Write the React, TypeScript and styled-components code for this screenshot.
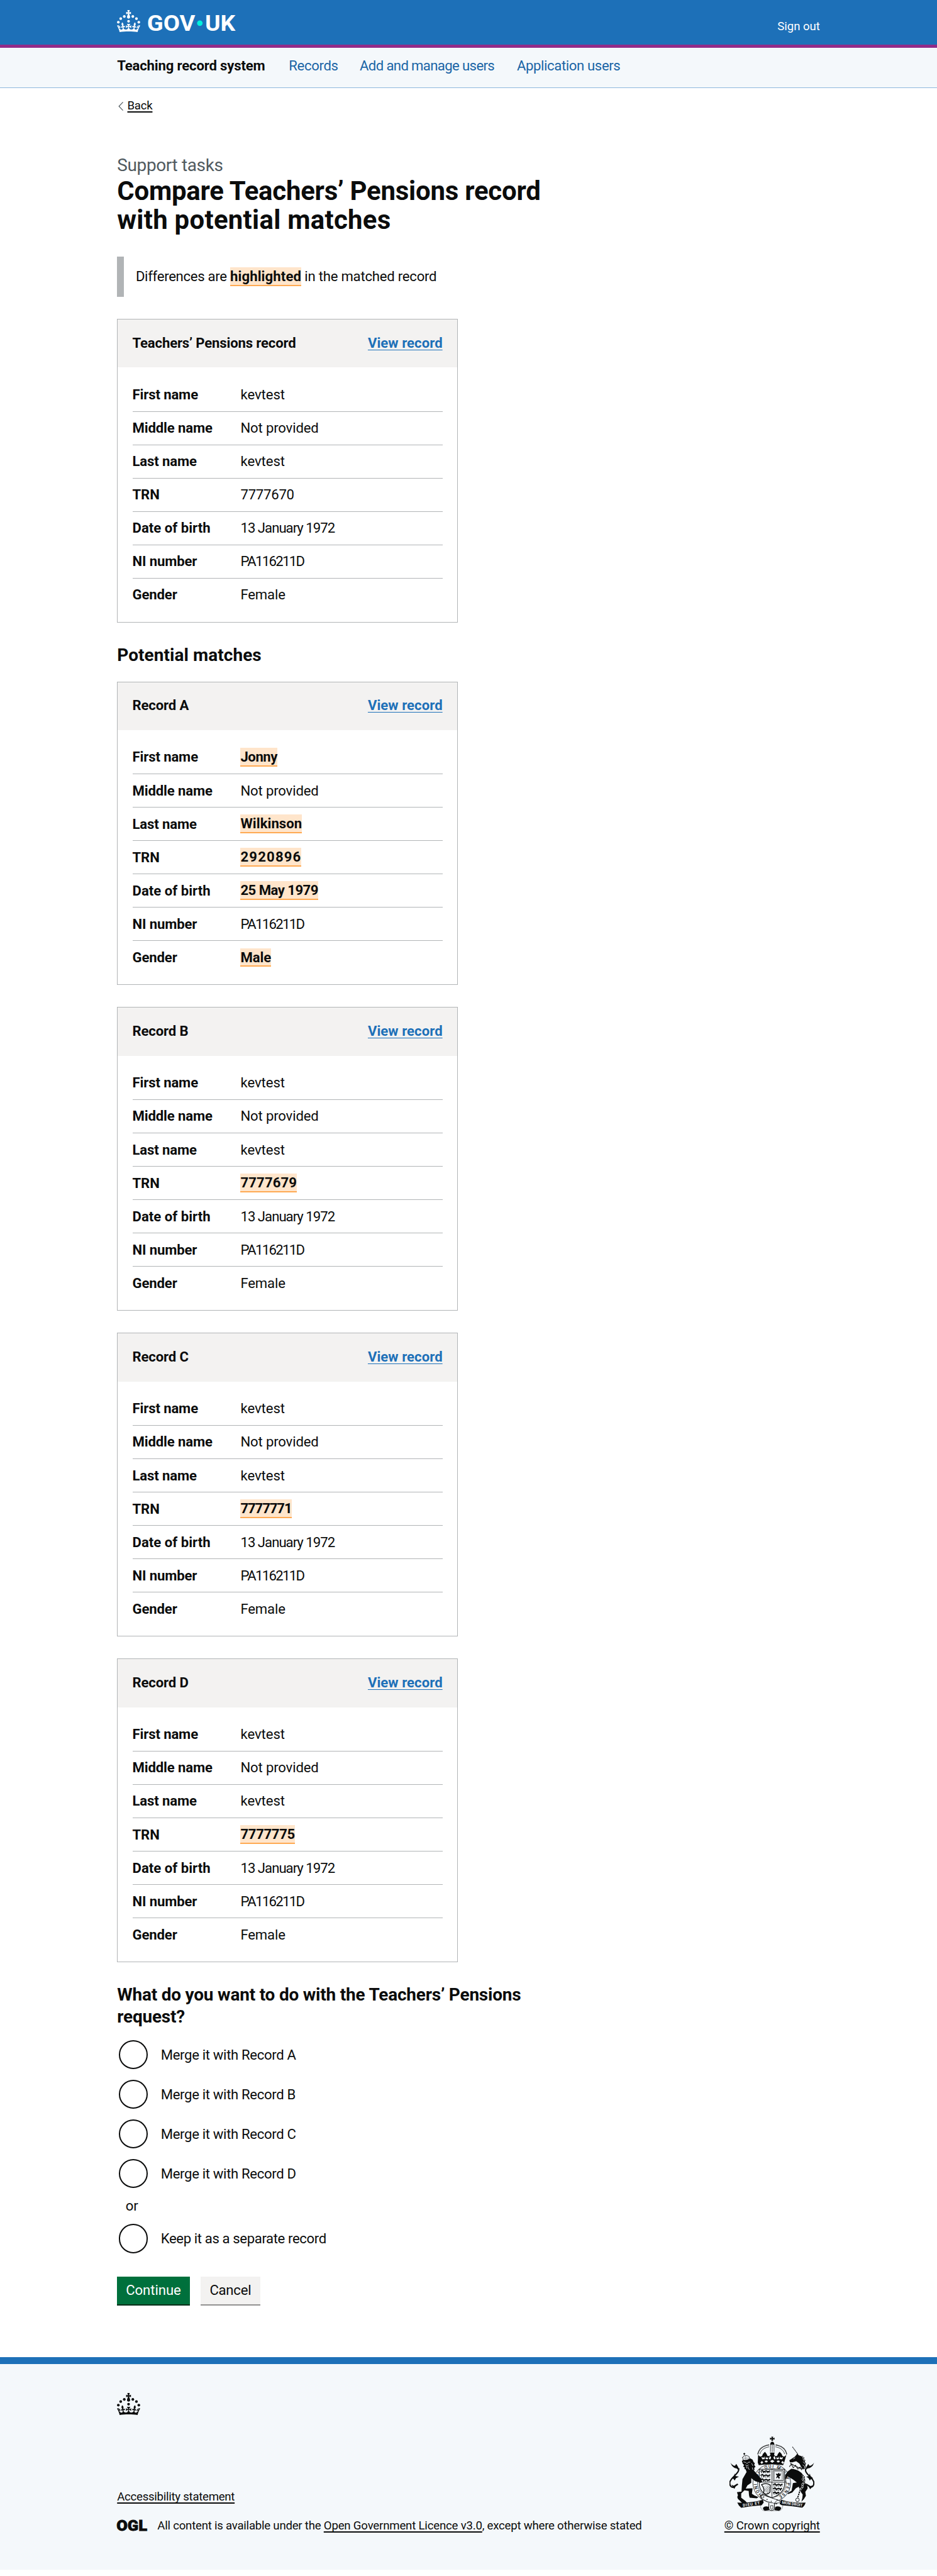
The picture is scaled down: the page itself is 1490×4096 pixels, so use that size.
import React from "react";
import styled, { createGlobalStyle } from "styled-components";

const GlobalStyle = createGlobalStyle`
  html {
    font-size: 11.640625px;
    background: #fff;
  }
  body {
    margin: 0;
    font-family: Roboto, "Liberation Sans", sans-serif;
    color: #0b0c0c;
    font-size: 1.9rem;
    line-height: 2.5rem;
  }
  *, *::before, *::after {
    box-sizing: border-box;
  }
`;

const Container = styled.div`
  width: 96rem;
  margin: 0 auto;
`;

/* spacing between letters, in em */
const Txt = styled.span<{ $track?: number }>`
  letter-spacing: ${({ $track = -0.013 }) => $track}em;
  white-space: nowrap;
`;

const Header = styled.header`
  background: #1d70b8;
  border-bottom: 0.4667rem solid #912b88;
`;

const HeaderInner = styled(Container)`
  height: 6.0667rem;
  display: flex;
  justify-content: space-between;
`;

const Logo = styled.svg`
  margin-top: 1.3333rem;
  width: 16.2rem;
  height: 3rem;
  fill: #fff;
  overflow: visible;
`;

const SignOut = styled.a`
  margin-top: 2.7rem;
  font-size: 1.6rem;
  line-height: 2rem;
  color: #fff;
  text-decoration: none;
`;

const ServiceNav = styled.nav`
  background: #f4f8fb;
  border-bottom: 1px solid #8eb8dc;
`;

const NavInner = styled(Container)`
  height: 5.4667rem;
  padding-top: 1.2333rem;
  display: flex;
`;

const ServiceName = styled.strong`
  font-weight: 700;
  width: 23.45rem;
`;

const NavLink = styled.a<{ $width: number }>`
  color: #1a65a6;
  text-decoration: none;
  width: ${({ $width }) => $width}rem;
`;

const BackLink = styled.a`
  display: flex;
  align-items: center;
  margin-top: 1.45rem;
  font-size: 1.6rem;
  line-height: 2rem;
  color: #0b0c0c;
`;

const BackArrow = styled.svg`
  width: 0.7rem;
  height: 1.2rem;
  margin: 0 0.57rem 0 0.13rem;
  fill: none;
  stroke: #505a5f;
  stroke-width: 1;
`;

const Underlined = styled.span<{ $track?: number }>`
  letter-spacing: ${({ $track = -0.013 }) => $track}em;
  text-decoration: underline;
  text-decoration-thickness: 2px;
  text-decoration-skip-ink: none;
  text-underline-offset: 3px;
  white-space: nowrap;
`;

const Caption = styled.span`
  display: block;
  margin-top: 5.6rem;
  font-size: 2.4rem;
  line-height: 3rem;
  color: #505a5f;
`;

const Title = styled.h1`
  margin: 0;
  font-size: 3.6rem;
  line-height: 4rem;
  font-weight: 700;
  letter-spacing: -0.005em;
`;

const InsetText = styled.div`
  margin-top: 2.97rem;
  padding: 1.4333rem 1.6rem;
  border-left: 1rem solid #b1b4b6;
  height: 5.4467rem;
  display: flex;
`;

const Mark = styled.mark<{ $track?: number }>`
  padding: 0.1rem 0 0.07rem;
  border-bottom: 2px solid #ffaa53;
  background: #ffe5cb;
  color: #0b0c0c;
  font-weight: 700;
  letter-spacing: ${({ $track = -0.005 }) => $track}em;
  white-space: nowrap;
`;

const SectionTitle = styled.h2`
  margin: 3.07rem 0 0;
  font-size: 2.4rem;
  line-height: 3rem;
  font-weight: 700;
  letter-spacing: 0.003em;
`;

const Card = styled.section<{ $gap?: number }>`
  width: 46.5333rem;
  height: 41.4667rem;
  margin-top: ${({ $gap = 3.0333 }) => $gap}rem;
  border: 1px solid #b1b4b6;
`;

const CardHeader = styled.div`
  height: 6.55rem;
  padding: 1.95rem 2rem 0;
  background: #f3f2f1;
  display: flex;
  justify-content: space-between;
  font-weight: 700;
`;

const ViewLink = styled.a`
  color: #1d70b8;
  text-decoration: underline;
  text-decoration-thickness: 1px;
  text-underline-offset: 3px;
  letter-spacing: 0.0023em;
`;

const List = styled.dl`
  margin: 0;
  padding: 1.5rem 2rem 0;
`;

const Row = styled.div`
  display: flex;
  height: 4.556rem;
  padding-top: 0.97rem;
  border-bottom: 1px solid #b1b4b6;
  &:last-child {
    border-bottom: 0;
  }
`;

const Key = styled.dt`
  width: 14.77rem;
  font-weight: 700;
`;

const Value = styled.dd`
  margin: 0;
`;

const Legend = styled.h2`
  margin: 3.03rem 0 1.6rem;
  font-size: 2.4rem;
  line-height: 3rem;
  font-weight: 700;
  letter-spacing: -0.0065em;
`;

const Radio = styled.label`
  display: flex;
  align-items: center;
  height: 4rem;
  margin: 0 0 1.413rem 0.2rem;
`;

const Circle = styled.span`
  width: 4rem;
  height: 4rem;
  margin-right: 1.77rem;
  border: 2px solid #0b0c0c;
  border-radius: 50%;
  background: #fff;
`;

const Divider = styled.div`
  margin: -0.25rem 0 1.2rem 1.15rem;
`;

const ButtonGroup = styled.div`
  display: flex;
  gap: 1.5rem;
  margin-top: 3.2rem;
`;

const Button = styled.button<{ $secondary?: boolean }>`
  width: ${({ $secondary }) => ($secondary ? "8.11rem" : "9.92rem")};
  height: 3.8rem;
  padding: 0;
  border: 0;
  border-radius: 0;
  font: inherit;
  text-align: center;
  background: ${({ $secondary }) => ($secondary ? "#f3f2f1" : "#00703c")};
  color: ${({ $secondary }) => ($secondary ? "#0b0c0c" : "#fff")};
  box-shadow: 0 2px 0 ${({ $secondary }) => ($secondary ? "#929191" : "#002d18")};
`;

const Footer = styled.footer`
  margin-top: 7.17rem;
  border-top: 1rem solid #1d70b8;
  background: #f4f8fb;
  padding: 4rem 0 4.95rem;
  font-size: 1.6rem;
  line-height: 2rem;
`;

const FooterCrown = styled.svg`
  display: block;
  width: 3.17rem;
  height: 3rem;
  fill: #0b0c0c;
`;

const Meta = styled.div`
  display: flex;
  justify-content: space-between;
  align-items: flex-end;
  margin-top: 2.93rem;
`;

const MetaLeft = styled.div`
  display: flex;
  flex-direction: column;
  gap: 1.96rem;
`;

const Licence = styled.div`
  display: flex;
`;

const OglLogo = styled.svg`
  width: 4.1rem;
  height: 1.7rem;
  margin-right: 1.4rem;
  overflow: visible;
`;

const MetaRight = styled.a`
  display: flex;
  flex-direction: column;
  align-items: center;
  gap: 0.97rem;
  color: #0b0c0c;
`;

const CrestSvg = styled.svg`
  display: block;
  width: 11.6rem;
  height: 10.25rem;
`;

const CrownShape = () => (
  <>
    <circle cx="20" cy="17.6" r="3.7" />
    <circle cx="10.2" cy="23.5" r="3.7" />
    <circle cx="3.7" cy="33.2" r="3.7" />
    <circle cx="31.7" cy="30.6" r="3.7" />
    <circle cx="43.3" cy="17.6" r="3.7" />
    <circle cx="53.2" cy="23.5" r="3.7" />
    <circle cx="59.7" cy="33.2" r="3.7" />
    <path d="M33.1,9.8c.2-.1.3-.3.5-.5l4.6,2.4v-6.8l-4.6,1.5c-.1-.2-.3-.3-.5-.5l1.9-5.9h-6.7l1.9,5.9c-.2.1-.3.3-.5.5l-4.6-1.5v6.8l4.6-2.4c.1.2.3.3.5.5l-2.6,8c-.9,2.8,1.2,5.7,4.1,5.7h0c3,0,5.1-2.9,4.1-5.7l-2.6-8ZM37,37.9s-3.4,3.8-4.1,6.1c2.2,0,4.2-.5,6.4-2.8l-.7,8.5c-2-2.8-4.4-4.1-5.7-3.8.1,3.1.5,6.7,5.8,7.2,3.7.3,6.7-1.5,7-3.8.4-2.6-2-4.3-3.7-1.6-1.4-4.5,2.4-6.1,4.9-3.2-1.9-4.5-1.8-7.7,2.4-10.9,3,4,2.6,7.3-1.2,11.1,2.4-1.3,6.2,0,4,4.6-1.2-2.8-3.7-2.2-4.2.2-.3,1.7.7,3.7,3,4.2,1.9.3,4.7-.9,7-5.9-1.3,0-2.4.7-3.9,1.7l2.4-8c.6,2.3,1.4,3.7,2.2,4.5.6-1.6.5-2.8,0-5.3l5,1.8c-2.6,3.6-5.2,8.7-7.3,17.5-7.4-1.1-15.7-1.7-24.5-1.7h0c-8.8,0-17.1.6-24.5,1.7-2.1-8.9-4.7-13.9-7.3-17.5l5-1.8c-.5,2.5-.6,3.7,0,5.3.8-.8,1.6-2.3,2.2-4.5l2.4,8c-1.5-1-2.6-1.7-3.9-1.7,2.3,5,5.2,6.2,7,5.9,2.3-.4,3.3-2.4,3-4.2-.5-2.4-3-3.1-4.2-.2-2.2-4.6,1.6-6,4-4.6-3.7-3.7-4.2-7.1-1.2-11.1,4.2,3.2,4.3,6.4,2.4,10.9,2.5-2.8,6.3-1.3,4.9,3.2-1.8-2.7-4.1-1-3.7,1.6.3,2.3,3.3,4.1,7,3.8,5.4-.5,5.7-4.2,5.8-7.2-1.3-.2-3.7,1-5.7,3.8l-.7-8.5c2.2,2.3,4.2,2.7,6.4,2.8-.7-2.3-4.1-6.1-4.1-6.1h10.6,0Z" />
  </>
);

const Crest = () => (
  <CrestSvg viewBox="288 283 522 461" fill="#0b0c0c" stroke="#0b0c0c">
    {/* crown */}
    <path d="M545 285h12l-3 9 11-3v12l-11-3 3 10h-12l3-10-11 3v-12l11 3z" stroke="none" />
    <path d="M541 322q10-14 20 0l4 12h-28z" stroke="none" />
    <path d="M540 334v44M562 334v44" fill="none" strokeWidth="3" />
    <path d="M551 338v40" fill="none" strokeWidth="5" strokeDasharray="5 4" />
    <path d="M527 336c-30 5-58 22-64 54M575 336c30 5 58 22 64 54" fill="none" strokeWidth="7" strokeLinecap="round" strokeDasharray="0.1 8" />
    <path d="M532 347c-26 4-50 18-57 44M570 347c26 4 50 18 57 44" fill="none" strokeWidth="3" />
    <path d="M464 396q8 10 14 12l10-4 6-14 12-12 10 12 6 14 12 0 6-10-4-12h30l-4 12 6 10 12 0 6-14 10-12 12 12 6 14 10 4q6-2 14-12l-14 48-6 16q-75-12-150 0l-6-16z" stroke="none" />
    <g fill="#f4f8fb" stroke="none">
      <path d="M484 410l14 4 4-8 4 16-16 2zM512 406l4 8 12-2-6 12-12-2zM536 404l8 6-4 14-10-2zM566 404l-8 6 4 14 10-2zM590 406l-4 8-12-2 6 12 12-2zM618 410l-14 4-4-8-4 16 16 2z" />
      <ellipse cx="514" cy="437" rx="9" ry="6" />
      <ellipse cx="588" cy="437" rx="9" ry="6" />
      <path d="M537 436l14-9 14 9-14 9zM478 443l10-9 8 9-10 9zM606 443l8-9 10 9-8 9z" />
    </g>

    {/* garter */}
    <circle cx="548" cy="569" r="116" fill="#f4f8fb" strokeWidth="3" />
    <circle cx="548" cy="569" r="88" fill="none" strokeWidth="2.5" />
    <path id="garter" d="M548 662a93 93 0 1 1 1 0" fill="none" stroke="none" />
    <text fontSize="26" fontWeight="500" stroke="none" letterSpacing="5.5">
      <textPath href="#garter" startOffset="62">HONI SOIT QUI MAL Y PENSE</textPath>
    </text>

    {/* shield */}
    <path d="M471 485h156v88c0 46-34 72-78 88-44-16-78-42-78-88z" fill="#f4f8fb" strokeWidth="4" />
    <path d="M549 485v174M471 565h156" fill="none" strokeWidth="3" />
    <g fill="none" strokeWidth="8">
      <path d="M479 498l12-5 8 8 14-6 12 6 14-7M479 523l12-5 8 8 14-6 12 6 14-7M479 550l12-5 8 8 14-6 12 6 14-7" />
      <path d="M556 580l12-5 8 8 14-6 12 6 12-7M556 605l12-5 8 8 14-6 12 6 8-7M556 630l12-5 8 8 12-6 6 4" />
    </g>
    <g fill="none" strokeWidth="4">
      <path d="M481 506h58M481 532h58M481 558h58M558 588h56M558 613h48M558 637h30" strokeDasharray="8 5" />
    </g>
    <rect x="558" y="493" width="60" height="63" fill="none" strokeWidth="3" />
    <rect x="564" y="499" width="48" height="51" fill="none" strokeWidth="1.5" />
    <path d="M573 512l10 2 10-8 4 10 8-8-4 18-10 2 8 10-8 6-6-10-12 8 8-18-6-4z" stroke="none" />
    <path d="M485 580q26-14 54 2l-2 44q-22 22-40 4 10-26-12-50z" fill="#f4f8fb" strokeWidth="5" />
    <path d="M500 588l30 36M510 585l22 28M520 584l14 18M498 600l26 30M532 584l-30 34M536 594l-30 34M536 608l-18 22" fill="none" strokeWidth="1.4" />

    {/* strap and buckle */}
    <path d="M478 648l16-9 20 10 56 20 16 5-8 24-60-14-34-18z" fill="#f4f8fb" strokeWidth="4" />
    <circle cx="492" cy="654" r="8" fill="none" strokeWidth="3" />
    <g stroke="none">
      <circle cx="519" cy="671" r="3" />
      <circle cx="545" cy="682" r="3" />
    </g>
    <path d="M564 694l16-18 22 2-10 14z" fill="#f4f8fb" strokeWidth="3" />
    <path d="M530 692v30a17 17 0 0 0 34 0v-26" fill="#f4f8fb" strokeWidth="4" />
    <path d="M541 708v16a7 7 0 0 0 14 0v-16z" fill="none" strokeWidth="3" />
    <path d="M494 722q14-14 34-6l4 20-26 4q-12-4-12-18zM606 722q-14-14-36-6l-6 20 28 4q12-4 14-18z" stroke="none" />
    <path d="M478 706q2 32 26 34h90q20-4 22-34" fill="none" strokeWidth="2" strokeDasharray="6 3" />

    {/* motto */}
    <path d="M336 690q80 4 158-18l4 18-12 16q-60 4-126 16-16-12-24-32zM756 690q-80 4-150-18l-10 26 14 8q60 4 126 15 14-10 20-31z" stroke="none" />
    <g fill="#f4f8fb" stroke="none" fontSize="24" fontWeight="700">
      <text x="371" y="715" textLength="106" transform="rotate(-8 371 715)">DIEU ET</text>
      <text x="610" y="697" textLength="128" lengthAdjust="spacingAndGlyphs" transform="rotate(8 610 697)">MON DROIT</text>
    </g>

    {/* lion */}
    <path d="M368 412l4 17h34l6-17q-22-24-44 0z" fill="none" strokeWidth="4" strokeDasharray="6 3" />
    <path d="M376 417h30M388 400v24" fill="none" strokeWidth="3" strokeDasharray="4 3" />
    <path d="M379 384v14M373 390h12" fill="none" strokeWidth="5" />
    <path d="M400 490l34-2 14 16 30 34 8 6-4 8 8 8-10 8-34-10-24-18 0 28-24 16-10 20 42-2-4 34 16 10 24 10-10 8-44-4-4-16-2-26-26-4-20 20 0 26 26 20 14 16-18-4-14 4-16-18-12-10-4-12 4-12-6-18 28-4 2-34 4-42z" stroke="none" />
    <path d="M364 434l10-6 12 2 16-6 14-6 14 8 6 14 8 8-4 10 8 12-8 6 2 14-10 2-2 14-12-6-8 8-8-12-10 4-4-14-8-2 2-10-10-6 6-10-8-6z" stroke="none" />
    <path d="M374 440l14 3 8 8 8-9 12-1M386 458l10 6 10-6M402 468l2 14 8 4M392 466l2 14M424 448l8 16M428 474l4 14" fill="none" stroke="#f4f8fb" strokeWidth="3" />
    <path d="M344 478c10 32-50 56-54 88-2 22 12 34 24 28 8-6 26-18 26-18" fill="none" strokeWidth="8" />
    <path d="M294 444q12 18 28 20l8-12 12 20 4 20-14-12q-26-2-38-36zM300 540l16-14 4-16 4 16 22 4-18 10-8 14-8-10zM300 580l14 6 24-14-12 18-8 16-10-12z" stroke="none" />

    {/* unicorn */}
    <path d="M675 347l34 46" fill="none" strokeWidth="4" strokeDasharray="6 2" />
    <path d="M656 430l34-22 16-20 6 10 22 8 14 24 4 30-8 26-12-10-14-26-20-14-24 6-14 0z" stroke="none" />
    <path d="M740 404l-6 8 12 2-4 12 10 4-4 12 8 6-4 14 4 10-10 12" fill="none" strokeWidth="4" />
    <path d="M680 422l12-8M734 404l8 14M738 420l10 14M740 438l10 12M738 458l10 8" fill="none" stroke="#f4f8fb" strokeWidth="3" />
    <path d="M662 448q36 24 78 36M656 470l12-16 12 22 14-16 14 24 14-12 10 18" fill="none" strokeWidth="4" />
    <path d="M632 566l-2-44 16-24 22-16q52 4 78 44 10 24 8 44 16 14 14 34l-14 20 4 24-14 22-14 14 6-22 2-22-14-20-10-28-18 10-22 26-26 10-2-6 24-16 8-46 24-4-24-18-32-20-14 22 8 26z" stroke="none" />
    <path d="M736 520l12 12-10 14 12 18-14 14 2 16-14 14-6 18-6 20-6 16" fill="none" stroke="#f4f8fb" strokeWidth="11" />
    <path d="M736 520l12 12-10 14 12 18-14 14 2 16-14 14-6 18-6 20-6 16" fill="none" strokeWidth="7" strokeDasharray="10 4" />
    <circle cx="706" cy="673" r="11" fill="none" strokeWidth="3.5" />
    <path d="M758 480c-16 30 48 56 49 88 0 20-12 30-24 24-8-4-24-16-24-16" fill="none" strokeWidth="8" />
    <path d="M808 444q-12 18-28 20l-8-12-12 20-6 20 14-12q30-2 40-36zM802 540l-16-14-4-16-4 16-18 4 14 10 8 14 8-10zM800 584l-14 4-22-12 12 18 8 14 10-12z" stroke="none" />
  </CrestSvg>
);

type Field = { value: string; track?: number; diff?: boolean };

const keys: { label: string; track: number }[] = [
  { label: "First name", track: -0.006 },
  { label: "Middle name", track: -0.006 },
  { label: "Last name", track: -0.006 },
  { label: "TRN", track: -0.006 },
  { label: "Date of birth", track: 0.001 },
  { label: "NI number", track: -0.006 },
  { label: "Gender", track: -0.006 },
];

const same = {
  name: { value: "kevtest", track: -0.002 },
  middle: { value: "Not provided", track: -0.007 },
  dob: { value: "13 January 1972", track: -0.044 },
  ni: { value: "PA116211D", track: -0.076 },
  gender: { value: "Female", track: -0.007 },
};

const withTrn = (trn: Field): Field[] => [
  same.name,
  same.middle,
  same.name,
  trn,
  same.dob,
  same.ni,
  same.gender,
];

const pensionsRecord = withTrn({ value: "7777670", track: -0.0106 });

const matches: { title: string; fields: Field[] }[] = [
  {
    title: "Record A",
    fields: [
      { value: "Jonny", track: -0.02, diff: true },
      same.middle,
      { value: "Wilkinson", track: 0.002, diff: true },
      { value: "2920896", track: 0.053, diff: true },
      { value: "25 May 1979", track: -0.024, diff: true },
      same.ni,
      { value: "Male", diff: true },
    ],
  },
  { title: "Record B", fields: withTrn({ value: "7777679", track: 0.006, diff: true }) },
  { title: "Record C", fields: withTrn({ value: "7777771", track: -0.05, diff: true }) },
  { title: "Record D", fields: withTrn({ value: "7777775", track: -0.015, diff: true }) },
];

type RecordCardProps = { title: string; fields: Field[]; gap?: number };

const RecordCard = ({ title, fields, gap }: RecordCardProps) => (
  <Card $gap={gap}>
    <CardHeader>
      <Txt $track={-0.007}>{title}</Txt>
      <ViewLink>View record</ViewLink>
    </CardHeader>
    <List>
      {fields.map((field, i) => (
        <Row key={keys[i].label}>
          <Key>
            <Txt $track={keys[i].track}>{keys[i].label}</Txt>
          </Key>
          <Value>
            {field.diff ? (
              <Mark $track={field.track}>{field.value}</Mark>
            ) : (
              <Txt $track={field.track}>{field.value}</Txt>
            )}
          </Value>
        </Row>
      ))}
    </List>
  </Card>
);

const App = () => {
  return (
    <>
      <GlobalStyle />
      <Header>
        <HeaderInner>
          <Logo viewBox="0 0 324 60">
            <CrownShape />
            <text x="82" y="57" fontSize="59.5" fontWeight="700" textLength="132" lengthAdjust="spacingAndGlyphs">
              GOV
            </text>
            <circle cx="226.4" cy="35.8" r="7.6" fill="#00ffe0" fillOpacity=".9" />
            <text x="240.5" y="57" fontSize="59.5" fontWeight="700" textLength="83" lengthAdjust="spacingAndGlyphs">
              UK
            </text>
          </Logo>
          <SignOut>
            <Txt $track={-0.003}>Sign out</Txt>
          </SignOut>
        </HeaderInner>
      </Header>
      <ServiceNav>
        <NavInner>
          <ServiceName>
            <Txt $track={-0.0073}>Teaching record system</Txt>
          </ServiceName>
          <NavLink $width={9.69}>
            <Txt $track={-0.015}>Records</Txt>
          </NavLink>
          <NavLink $width={21.47}>
            <Txt $track={-0.028}>Add and manage users</Txt>
          </NavLink>
          <NavLink $width={15}>
            <Txt $track={-0.0167}>Application users</Txt>
          </NavLink>
        </NavInner>
      </ServiceNav>
      <Container>
        <BackLink>
          <BackArrow viewBox="0 0 7 12">
            <path d="M6.5 .3L1 6l5.5 5.7" />
          </BackArrow>
          <Underlined>Back</Underlined>
        </BackLink>
        <Caption>
          <Txt $track={-0.0122}>Support tasks</Txt>
        </Caption>
        <Title>
          Compare Teachers’ Pensions record
          <br />
          <Txt $track={0.007}>with potential matches</Txt>
        </Title>
        <InsetText>
          <div>
            <Txt>Differences are </Txt>
            <Mark $track={0.005}>highlighted</Mark>
            <Txt $track={-0.01}> in the matched record</Txt>
          </div>
        </InsetText>
        <RecordCard title="Teachers’ Pensions record" fields={pensionsRecord} />
        <SectionTitle>Potential matches</SectionTitle>
        {matches.map((match, i) => (
          <RecordCard key={match.title} {...match} gap={i === 0 ? 2 : undefined} />
        ))}
        <Legend>
          What do you want to do with the Teachers’ Pensions
          <br />
          request?
        </Legend>
        {["A", "B", "C", "D"].map((letter) => (
          <Radio key={letter}>
            <Circle />
            <Txt $track={-0.0148}>Merge it with Record {letter}</Txt>
          </Radio>
        ))}
        <Divider>or</Divider>
        <Radio>
          <Circle />
          <Txt $track={-0.017}>Keep it as a separate record</Txt>
        </Radio>
        <ButtonGroup>
          <Button>
            <Txt $track={-0.002}>Continue</Txt>
          </Button>
          <Button $secondary>
            <Txt $track={-0.01}>Cancel</Txt>
          </Button>
        </ButtonGroup>
      </Container>
      <Footer>
        <Container>
          <FooterCrown viewBox="0 0 63.4 60">
            <CrownShape />
          </FooterCrown>
          <Meta>
            <MetaLeft>
              <div>
                <Underlined $track={-0.0145}>Accessibility statement</Underlined>
              </div>
              <Licence>
                <OglLogo viewBox="0 0 61.5 25.5">
                  <text
                    x="-1"
                    y="24.3"
                    fontSize="32"
                    fontWeight="900"
                    textLength="63"
                    lengthAdjust="spacingAndGlyphs"
                    fill="#0b0c0c"
                    stroke="#0b0c0c"
                    strokeWidth="1"
                  >
                    OGL
                  </text>
                </OglLogo>
                <div>
                  <Txt $track={-0.0121}>All content is available under the </Txt>
                  <Underlined $track={-0.0099}>Open Government Licence v3.0</Underlined>
                  <Txt $track={-0.0121}>, except where otherwise stated</Txt>
                </div>
              </Licence>
            </MetaLeft>
            <MetaRight>
              <Crest />
              <Underlined $track={-0.0067}>© Crown copyright</Underlined>
            </MetaRight>
          </Meta>
        </Container>
      </Footer>
    </>
  );
};

export default App;
